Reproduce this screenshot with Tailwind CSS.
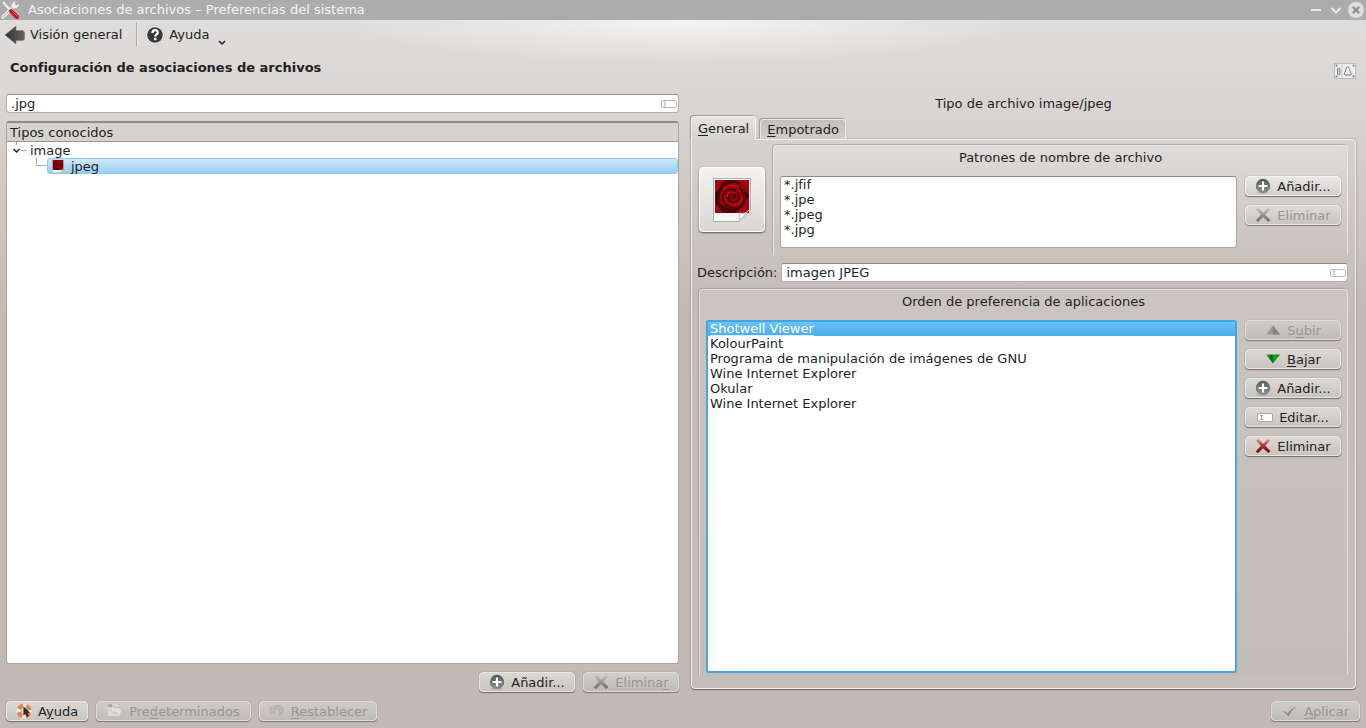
<!DOCTYPE html>
<html lang="es">
<head>
    <meta charset="utf-8">
    <title>Asociaciones de archivos – Preferencias del sistema</title>
    <script src="https://cdn.jsdelivr.net/npm/@tailwindcss/browser@4"></script>
</head>
<body class="h-screen flex flex-col overflow-hidden font-['DejaVu_Sans',sans-serif] text-[13px] leading-[15px] text-[#221f1e] bg-[#c3bab7] bg-[radial-gradient(340px_44px_at_50%_20px,#f4f3f2_0%,#f4f3f200_100%),linear-gradient(#dfdddb_20px,#d8d4d1_110px,#c3bab7_310px)]">

    <!-- Shared icons -->
    <svg class="absolute w-0 h-0" aria-hidden="true">
        <defs>
            <linearGradient id="gray" x1="0" y1="0" x2="0" y2="1"><stop offset="0" stop-color="#555b5b"/><stop offset="1" stop-color="#8b9090"/></linearGradient>
            <linearGradient id="fade" gradientUnits="userSpaceOnUse" x1="0" y1="0" x2="0" y2="16"><stop offset="0" stop-color="#c9c7c4"/><stop offset="1" stop-color="#666462"/></linearGradient>
            <linearGradient id="red" gradientUnits="userSpaceOnUse" x1="0" y1="0" x2="0" y2="16"><stop offset="0" stop-color="#efa5a5"/><stop offset=".5" stop-color="#a52a2f"/><stop offset="1" stop-color="#6c0000"/></linearGradient>
            <linearGradient id="green"><stop offset="0" stop-color="#4f9a4f"/><stop offset=".4" stop-color="#0a5f0a"/><stop offset=".6" stop-color="#10b010"/><stop offset="1" stop-color="#067806"/></linearGradient>
            <linearGradient id="arrow" x1="0" y1="0" x2="1" y2="0"><stop offset="0" stop-color="#303030"/><stop offset="1" stop-color="#666"/></linearGradient>
            <radialGradient id="petal"><stop offset="0" stop-color="#6e0209"/><stop offset=".6" stop-color="#a8040f"/><stop offset="1" stop-color="#8d030b"/></radialGradient>
        </defs>
        <symbol id="i-add" viewBox="0 0 16 16">
            <ellipse cx="8" cy="14.8" rx="6" ry="1" fill="#000" opacity=".12"/>
            <circle cx="8" cy="8" r="7.2" fill="url(#gray)"/>
            <path d="M8 3.500v9M3.500 8h9" stroke="#fff" stroke-width="2.200"/>
        </symbol>
        <symbol id="i-x" viewBox="0 0 16 16">
            <path d="M1 2.500 3.500 1l4.700 4.800L13 1l2 1.500-4.800 5.300 5.300 5.200-2.200 2L8 10.300 3 15l-2.300-1.600 5.100-5.600z" fill="url(#fade)"/>
        </symbol>
        <symbol id="i-xred" viewBox="0 0 16 16">
            <path d="M1 2.500 3.500 1l4.700 4.800L13 1l2 1.500-4.800 5.300 5.300 5.200-2.200 2L8 10.300 3 15l-2.300-1.600 5.100-5.600z" fill="url(#red)"/>
        </symbol>
        <symbol id="i-edit" viewBox="0 0 16 16">
            <rect x=".5" y="4.500" width="15" height="8" rx="1.500" fill="#fff" stroke="#a5a5a5"/>
            <path d="M3 6.500h3M3 10.500h3M4.500 6.500v4" stroke="#888" stroke-width=".8"/>
        </symbol>
        <symbol id="i-clear" viewBox="0 0 16 10">
            <rect x=".5" y="1.500" width="15" height="7" rx="1.500" fill="#fff" stroke="#bbb"/>
            <path d="M2.500 3h3M2.500 7h3M4 3v4" stroke="#bbb" stroke-width="1"/>
        </symbol>
        <symbol id="i-rose" viewBox="0 0 40 46">
            <path d="M1 1h38v32L27 45H1z" fill="#8e8c8a" opacity=".6"/>
            <path d="M2 2h36v31L27 44H2z" fill="#f6f6f6"/>
            <path d="M3 3h34v33H3z" fill="#4a0206"/>
            <path d="M3 3h10L6 13l-3 3zM37 3v15L28 6l-5-3zM37 20v16H24zM3 25l8 11H3z" fill="#a30610"/>
            <path d="M20 4c9-1 15 6 14 14s-8 16-16 15S5 25 6 17 12 5 20 4z" fill="url(#petal)"/>
            <path d="M8 23C4 13 14 5 23 8s11 13 5 19-16 3-17-5 7-12 13-8 3 11-3 11-7-8-2-9 5 5 2 5M6 15c4-8 14-13 22-8M33 14c3 9-3 18-12 19M10 28c6 7 17 6 22-3" fill="none" stroke="#3a0106" stroke-width="1.500"/>
            <path d="M11 12c4-5 12-5 16-2M31 20c-1 6-5 9-10 9M15 20c0-4 5-6 8-4" fill="none" stroke="#c8101c" stroke-width="1.400"/>
            <path d="M37 33 27 44c1-3 1-5 0-8 4 1 7 0 10-3z" fill="#fff" stroke="#b5b5b5" stroke-width=".8"/>
        </symbol>
    </svg>

    <!-- Title bar -->
    <header class="h-5 shrink-0 flex items-center bg-[#acacac] text-[#f5f5f5]">
        <svg class="w-5 h-5 mr-2" viewBox="0 0 20 20">
            <path d="M3 17 13 7" stroke="#e8e8e8" stroke-width="3.500" stroke-linecap="round"/>
            <path d="M3 17 13 7" stroke="#bdbdbd" stroke-width="1"/>
            <path d="M12 8c-2-3 0-7 4-7l-1 3 2 1 2-2c1 4-3 7-7 5z" fill="#eee" stroke="#999" stroke-width=".5"/>
            <path d="M3 2l8 9" stroke="#eee" stroke-width="2.200"/>
            <path d="M11 11l6 6" stroke="#c91414" stroke-width="4" stroke-linecap="round"/>
            <path d="M12 11l5 5" stroke="#f06a60" stroke-width="1" stroke-linecap="round"/>
        </svg>
        <h1 class="grow pb-0.5">Asociaciones de archivos – Preferencias del sistema</h1>
        <div class="flex items-center gap-1 pr-0.5">
            <button aria-label="Minimizar" class="w-4 h-4"><svg viewBox="0 0 16 16"><path d="M3 8h10" stroke="#e9e9e9" stroke-width="2"/></svg></button>
            <button aria-label="Maximizar" class="w-4 h-4"><svg viewBox="0 0 16 16"><path d="M3.500 6l4.500 4.500L12.500 6" fill="none" stroke="#e9e9e9" stroke-width="2.200"/></svg></button>
            <button aria-label="Cerrar" class="w-4 h-4"><svg viewBox="0 0 16 16"><circle cx="8" cy="8" r="8" fill="#dfdfdf"/><path d="M4.800 4.800l6.400 6.400M11.200 4.800l-6.400 6.400" stroke="#929292" stroke-width="2.500"/></svg></button>
        </div>
    </header>

    <!-- Toolbar -->
    <nav class="h-[29px] shrink-0 flex items-center pl-1">
        <button class="flex items-center gap-1">
            <svg class="w-[22px] h-[22px]" viewBox="0 0 22 22"><path d="M1 11 12 2v4.500h6.500l2 1.500v7l-1.500 1.500H12V20z" fill="url(#arrow)" stroke="#777" stroke-width=".6"/></svg>
            Visión general
        </button>
        <span class="w-px h-6 ml-3.5 mr-2 bg-[#b0acaa] shadow-[1px_0_#ebe9e8]"></span>
        <button class="flex items-center gap-1">
            <svg class="w-5 h-5" viewBox="0 0 20 20"><circle cx="10" cy="10" r="9.500" fill="#efefef" stroke="#c5c3c1" stroke-width=".8"/><circle cx="10" cy="10" r="7.800" fill="#393939"/><path d="M7.400 8c0-3.800 5.400-3.600 5.400-.6 0 2-2.500 2-2.500 4" fill="none" stroke="#fff" stroke-width="2.200"/><circle cx="10.200" cy="14" r="1.400" fill="#fff"/></svg>
            <span>Ayuda</span>
            <svg class="w-2 h-2 mt-4 ml-1" viewBox="0 0 8 8"><path d="M1 2 4 5 7 2" fill="none" stroke="#222" stroke-width="1.500"/></svg>
        </button>
    </nav>

    <div class="h-[45px] shrink-0 flex items-center justify-between pl-2.5 pr-2.5 pb-2">
        <h2 class="font-bold">Configuración de asociaciones de archivos</h2>
        <svg class="w-[22px] h-4 mt-1.5" viewBox="0 0 22 16">
            <rect x=".5" y=".5" width="21" height="15" fill="#ededed" stroke="#bbb"/>
            <path d="M8 1v14" stroke="#ccc"/>
            <g fill="#777"><circle cx="2.500" cy="2.500" r="1"/><circle cx="19.500" cy="2.500" r="1"/><circle cx="2.500" cy="13.500" r="1"/><circle cx="19.500" cy="13.500" r="1"/></g>
            <rect x="3.500" y="5" width="2.500" height="7" rx="1" fill="#ccc" stroke="#888"/>
            <path d="M13 4c2-1 2.500 2 3 4s2 3 1 4h-6c-1.500-1 0-2.500.6-4S12 4.600 13 4z" fill="#f8f8f8" stroke="#777"/>
        </svg>
    </div>

    <main class="grow min-h-0 grid grid-cols-[673fr_665fr] gap-3 pl-1.5 pr-2.5">

        <!-- Known types -->
        <section class="flex flex-col min-w-0">
            <div class="h-[19px] flex items-center rounded-[3px] bg-white border border-[#b5b0ad] border-t-[#8f8b88] pr-px">
                <input type="text" value=".jpg" aria-label="Buscar tipos" class="grow min-w-0 h-4 pl-1 outline-none">
                <button aria-label="Limpiar" class="w-4 h-2.5"><svg class="w-4 h-2.5"><use href="#i-clear"/></svg></button>
            </div>
            <div class="grow mt-2 rounded-[3px] bg-white border border-[#aaa5a2] border-t-2 border-t-[#8f8b88] overflow-hidden">
                <div class="h-[19px] pl-[3px] pt-0.5 bg-[#d6d2cf] border-b border-[#9b9795]">Tipos conocidos</div>
                <ul>
                    <li>
                        <div class="h-4 flex items-center">
                            <svg class="w-[22px] h-4 mr-px" viewBox="0 0 22 16"><path d="M9.500 0v3M14 8.500h6" stroke="#aaa"/><path d="M6.500 7l3 3 3-3" fill="none" stroke="#222" stroke-width="1.500"/></svg>
                            image
                        </div>
                        <ul class="pl-[29px]">
                            <li class="h-4 flex items-center">
                                <svg class="w-[11px] h-4 shrink-0" viewBox="0 0 11 16"><path d="M.5 0v7.500H11" fill="none" stroke="#aaa"/></svg>
                                <div class="grow h-4 flex items-center gap-1.5 pl-[3px] rounded-[3px] border border-[#93c9ec] bg-linear-to-b from-[#cfe9fc] to-[#98cdf2]">
                                    <svg class="w-[14px] h-[14px]"><use href="#i-rose"/></svg>
                                    <span>jpeg</span>
                                </div>
                            </li>
                        </ul>
                    </li>
                </ul>
            </div>
            <div class="flex justify-end gap-2 pt-2 pb-1">
                <button class="w-24 h-5 flex items-center justify-center gap-1.5 rounded-[4px] border border-[#e9e7e4] bg-linear-to-b from-[#dcd9d5] to-[#c8c4bf] shadow-[0_1px_1px_#6f6a68,0_0_1px_#777]"><svg class="w-4 h-4"><use href="#i-add"/></svg>Añadir...</button>
                <button disabled class="w-24 h-5 flex items-center justify-center gap-1.5 rounded-[4px] border border-[#dedbd8] bg-linear-to-b from-[#d2cecb] to-[#c0bab6] shadow-[0_1px_1px_#7d7876,0_0_1px_#888] text-[#9a9592]"><svg class="w-4 h-4"><use href="#i-x"/></svg><span>Elimina<u class="underline-offset-2">r</u></span></button>
            </div>
        </section>

        <!-- File type details -->
        <section class="flex flex-col min-w-0 pb-[7px]">
            <h3 class="h-[22px] pt-0.5 text-center">Tipo de archivo image/jpeg</h3>
            <div role="tablist" class="flex items-end gap-1 relative z-10">
                <button role="tab" aria-selected="true" class="h-6 px-1.5 -mb-px rounded-t-[4px] border border-b-0 border-[#f4f3f2] bg-linear-to-b from-[#e4e2e0] to-[#d6d2cf] shadow-[-1px_-1px_1px_#9a9694]"><u class="underline-offset-2">G</u>eneral</button>
                <button role="tab" aria-selected="false" class="h-5 px-1.5 rounded-t-[4px] border border-b-0 border-[#e9e7e5] bg-linear-to-b from-[#c6bebb] to-[#d2cdca] shadow-[-1px_-1px_1px_#9a9694]"><u class="underline-offset-2">E</u>mpotrado</button>
            </div>
            <div role="tabpanel" class="grow min-h-0 flex flex-col px-[7px] pt-[5px] pb-[13px] rounded-[4px] rounded-tl-none border border-[#f0eeed] shadow-[0_1px_1px_#6f6a68,0_0_2px_#8b8684] bg-linear-to-b from-[#d6d2cf] via-[#c3bcb9] via-30% to-[#c5bfbb]">
                <div class="flex gap-2">
                    <button aria-label="Icono" class="w-[66px] h-[65px] mt-[22px] shrink-0 flex items-center justify-center rounded-[4px] border border-[#fafafa] bg-linear-to-b from-[#f3f2f0] to-[#d9d7d2] shadow-[0_1px_2px_#555]">
                        <svg class="w-10 h-[46px]"><use href="#i-rose"/></svg>
                    </button>
                    <fieldset class="grow min-w-0 h-[110px] px-1.5 rounded-t-[4px] border border-b-0 border-[#e9e7e5] shadow-[-1px_-1px_1px_#b0aba9] bg-linear-to-b from-[#dedbd9] to-[#c8c2bf]">
                        <div class="pt-1 h-[30px] text-center">Patrones de nombre de archivo</div>
                        <div class="flex gap-2">
                            <ul aria-label="Patrones" class="grow h-[72px] pl-[3px] rounded-[3px] bg-white border border-[#aaa5a2] border-t-[#8f8b88]">
                                <li>*.jfif</li>
                                <li>*.jpe</li>
                                <li>*.jpeg</li>
                                <li>*.jpg</li>
                            </ul>
                            <div class="flex flex-col gap-[9px]">
                                <button class="w-24 h-5 flex items-center justify-center gap-1.5 rounded-[4px] border border-[#f4f3f1] bg-linear-to-b from-[#ebe9e7] to-[#d2cfcb] shadow-[0_1px_1px_#6f6a68,0_0_1px_#777]"><svg class="w-4 h-4"><use href="#i-add"/></svg>Añadir...</button>
                                <button disabled class="w-24 h-5 flex items-center justify-center gap-1.5 rounded-[4px] border border-[#e6e4e2] bg-linear-to-b from-[#dedbd9] to-[#c9c5c1] shadow-[0_1px_1px_#7d7876,0_0_1px_#888] text-[#9a9592]"><svg class="w-4 h-4"><use href="#i-x"/></svg>Eliminar</button>
                            </div>
                        </div>
                    </fieldset>
                </div>

                <div class="flex items-center gap-1 mt-2 -ml-[2px]">
                    <label for="desc">Descripción:</label>
                    <div class="grow h-[19px] flex items-center rounded-[3px] bg-white border border-[#b5b0ad] border-t-[#8f8b88] pr-px">
                        <input type="text" id="desc" value="imagen JPEG" class="grow min-w-0 h-4 pl-1 outline-none">
                        <button aria-label="Limpiar" class="w-4 h-2.5"><svg class="w-4 h-2.5"><use href="#i-clear"/></svg></button>
                    </div>
                </div>

                <fieldset class="grow min-h-0 flex flex-col mt-[7px] px-1.5 pb-0.5 rounded-t-[4px] border border-b-0 border-[#e2dfdd] shadow-[-1px_-1px_1px_#a5a09e] bg-linear-to-b from-[#cbc5c2] to-[#c3bdb9]">
                    <div class="pt-1 h-[30px] shrink-0 text-center">Orden de preferencia de aplicaciones</div>
                    <div class="grow flex gap-2">
                        <ul aria-label="Aplicaciones" class="grow rounded-[3px] bg-white border-2 border-[#43a8e0] overflow-hidden">
                            <li class="h-[14px] leading-[14px] pl-0.5 text-white bg-linear-to-b from-[#6cc1f8] to-[#49aeea]"><span class="underline decoration-white/80 underline-offset-2">Shotwell Viewer</span></li>
                            <li class="pl-0.5">KolourPaint</li>
                            <li class="pl-0.5">Programa de manipulación de imágenes de GNU</li>
                            <li class="pl-0.5">Wine Internet Explorer</li>
                            <li class="pl-0.5">Okular</li>
                            <li class="pl-0.5">Wine Internet Explorer</li>
                        </ul>
                        <div class="flex flex-col gap-[9px]">
                            <button disabled class="w-24 h-5 flex items-center justify-center gap-1.5 rounded-[4px] border border-[#dedbd8] bg-linear-to-b from-[#d0ccc8] to-[#c0bbb6] shadow-[0_1px_1px_#7d7876,0_0_1px_#888] text-[#9a9592]"><svg class="w-4 h-4" viewBox="0 0 16 16"><path d="M1 12.500 8 3.500l7 9z" fill="#9a9896"/><path d="M8 3.500v9h7z" fill="#858381"/></svg><span>S<u class="underline-offset-2">u</u>bir</span></button>
                            <button class="w-24 h-5 flex items-center justify-center gap-1.5 rounded-[4px] border border-[#e9e7e4] bg-linear-to-b from-[#dcd9d5] to-[#c8c4bf] shadow-[0_1px_1px_#6f6a68,0_0_1px_#777]"><svg class="w-4 h-4" viewBox="0 0 16 16"><path d="M1 3.500h14l-7 9z" fill="url(#green)"/></svg><span><u class="underline-offset-2">B</u>ajar</span></button>
                            <button class="w-24 h-5 flex items-center justify-center gap-1.5 rounded-[4px] border border-[#e9e7e4] bg-linear-to-b from-[#dcd9d5] to-[#c8c4bf] shadow-[0_1px_1px_#6f6a68,0_0_1px_#777]"><svg class="w-4 h-4"><use href="#i-add"/></svg>Añadir...</button>
                            <button class="w-24 h-5 flex items-center justify-center gap-1.5 rounded-[4px] border border-[#e9e7e4] bg-linear-to-b from-[#dcd9d5] to-[#c8c4bf] shadow-[0_1px_1px_#6f6a68,0_0_1px_#777]"><svg class="w-4 h-4"><use href="#i-edit"/></svg>Editar...</button>
                            <button class="w-24 h-5 flex items-center justify-center gap-1.5 rounded-[4px] border border-[#e9e7e4] bg-linear-to-b from-[#dcd9d5] to-[#c8c4bf] shadow-[0_1px_1px_#6f6a68,0_0_1px_#777]"><svg class="w-4 h-4"><use href="#i-xred"/></svg>Eliminar</button>
                        </div>
                    </div>
                </fieldset>
            </div>
        </section>
    </main>

    <!-- Dialog buttons -->
    <footer class="shrink-0 flex items-center gap-2 px-1.5 pt-[5px] pb-[7px]">
        <button class="h-5 px-[9px] flex items-center gap-1.5 rounded-[4px] border border-[#e9e7e4] bg-linear-to-b from-[#dcd9d5] to-[#c8c4bf] shadow-[0_1px_1px_#6f6a68,0_0_1px_#777]">
            <svg class="w-4 h-4" viewBox="0 0 16 16"><circle cx="8" cy="8" r="5.500" fill="none" stroke="#eee" stroke-width="4"/><circle cx="8" cy="8" r="5.500" fill="none" stroke="#e5803c" stroke-width="4" stroke-dasharray="5.200 3.440" stroke-dashoffset="-1.700"/><path d="M7.500 3.500v9l2-1.800 1.500 3.300 2-1-1.500-3 2.700-.3z" fill="#2b2b2b"/></svg>
            <span>A<u class="underline-offset-2">y</u>uda</span>
        </button>
        <button disabled class="h-5 px-[10px] flex items-center gap-1.5 rounded-[4px] border border-[#dedbd8] bg-linear-to-b from-[#d0ccc8] to-[#c0bbb6] shadow-[0_1px_1px_#7d7876,0_0_1px_#888] text-[#9a9592]">
            <svg class="w-4 h-4" viewBox="0 0 16 16"><path d="M1 1h10v12H1z" fill="#dad8d6"/><path d="M1 1h4v3H1z" fill="#aaa7a5"/><path d="M3 6l4-4v2.500h4c5 0 5 9-3 10.500 4-3 3-6 0-6H7V11z" fill="#e3e1df" stroke="#bab7b5" stroke-width=".8"/></svg>
            <span>Pre<u class="underline-offset-2">d</u>eterminados</span>
        </button>
        <button disabled class="h-5 px-[9px] flex items-center gap-1.5 rounded-[4px] border border-[#dedbd8] bg-linear-to-b from-[#d0ccc8] to-[#c0bbb6] shadow-[0_1px_1px_#7d7876,0_0_1px_#888] text-[#9a9592]">
            <svg class="w-4 h-4" viewBox="0 0 16 16"><path d="M1 3v7h6L5 7.500c4-2.500 7-.5 5 5.500C17 9 15 2 8.500 2 6 2 4.500 3.500 3 5z" fill="#bab6b3" stroke="#aca8a5" stroke-width=".5"/></svg>
            <span><u class="underline-offset-2">R</u>establecer</span>
        </button>
        <button disabled class="ml-auto h-5 px-[10px] flex items-center gap-1.5 rounded-[4px] border border-[#dedbd8] bg-linear-to-b from-[#d0ccc8] to-[#c0bbb6] shadow-[0_1px_1px_#7d7876,0_0_1px_#888] text-[#9a9592]">
            <svg class="w-4 h-4" viewBox="0 0 16 16"><path d="M1 8.500c2-.5 3 .5 4.500 2C8 7 11 4.500 15 3c-3.500 2.500-6 6-8.500 10.500C5 11.500 3 9.500 1 8.500z" fill="#8f8b89"/></svg>
            <span><u class="underline-offset-2">A</u>plicar</span>
        </button>
    </footer>
</body>
</html>
